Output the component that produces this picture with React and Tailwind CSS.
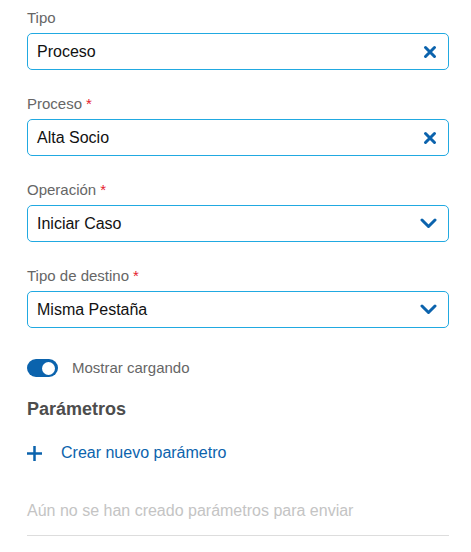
import React, { useState } from 'react';

const fields = [
  { label: 'Tipo', value: 'Proceso', required: false, kind: 'clear' },
  { label: 'Proceso', value: 'Alta Socio', required: true, kind: 'clear' },
  { label: 'Operación', value: 'Iniciar Caso', required: true, kind: 'select' },
  { label: 'Tipo de destino', value: 'Misma Pestaña', required: true, kind: 'select' },
];

function ClearIcon() {
  return (
    <svg width="14" height="14" viewBox="0 0 14 14" className="shrink-0">
      <path d="M2.5 2.5 L11.5 11.5 M11.5 2.5 L2.5 11.5" stroke="#0b63ad" strokeWidth="3" strokeLinecap="round" fill="none" />
    </svg>
  );
}

function ChevronIcon() {
  return (
    <svg width="17" height="11" viewBox="0 0 17 11" className="shrink-0">
      <path d="M2 2 L8.5 8.5 L15 2" stroke="#0b63ad" strokeWidth="3" strokeLinecap="round" strokeLinejoin="round" fill="none" />
    </svg>
  );
}

function Field({ label, value, required, kind }) {
  return (
    <div className="flex flex-col">
      <label className="text-[15px] leading-5 text-[#666666] mb-[5px]">
        {label}
        {required && <span className="text-[#e5202e] ml-[4px]">*</span>}
      </label>
      <div className="h-[37px] flex items-center justify-between border border-[#21a9e1] rounded-[5px] pl-[9px] pr-[11px] bg-white">
        <span className="text-[16px] text-[#111111]">{value}</span>
        {kind === 'clear' ? <ClearIcon /> : <ChevronIcon />}
      </div>
    </div>
  );
}

export default function App() {
  const [loading, setLoading] = useState(true);

  return (
    <div className="w-[471px] h-[552px] bg-white pl-[27px] pr-[22px] pt-2 font-['Liberation_Sans',Arial,sans-serif]">
      <div className="flex flex-col gap-6">
        {fields.map((f) => <Field key={f.label} {...f} />)}
      </div>

      {/* Toggle */}
      <div className="flex items-center gap-[14px] mt-[30px]">
        <button
          type="button"
          onClick={() => setLoading(!loading)}
          className={`relative w-[31px] h-[18px] rounded-full ${loading ? 'bg-[#0b63ad]' : 'bg-gray-300'}`}
        >
          <span className={`absolute top-[2.5px] w-[13px] h-[13px] rounded-full bg-white ${loading ? 'right-[3px]' : 'left-[3px]'}`} />
        </button>
        <span className="text-[15px] leading-5 text-[#666666]">Mostrar cargando</span>
      </div>

      <h2 className="mt-[19px] text-[18px] leading-6 font-bold text-[#4d4d4d]">Parámetros</h2>

      <button type="button" className="mt-5 flex items-center gap-[19px] text-[#0b63ad]">
        <svg width="15" height="15" viewBox="0 0 15 15" className="shrink-0">
          <path d="M7.5 0 V15 M0 7.5 H15" stroke="#0b63ad" strokeWidth="2.5" fill="none" />
        </svg>
        <span className="text-[16px] leading-6">Crear nuevo parámetro</span>
      </button>

      <p className="mt-[34px] text-[16px] leading-6 text-[#c4c4c4]">Aún no se han creado parámetros para enviar</p>
      <div className="mt-[12px] h-px bg-[#dddddd]" />
    </div>
  );
}
